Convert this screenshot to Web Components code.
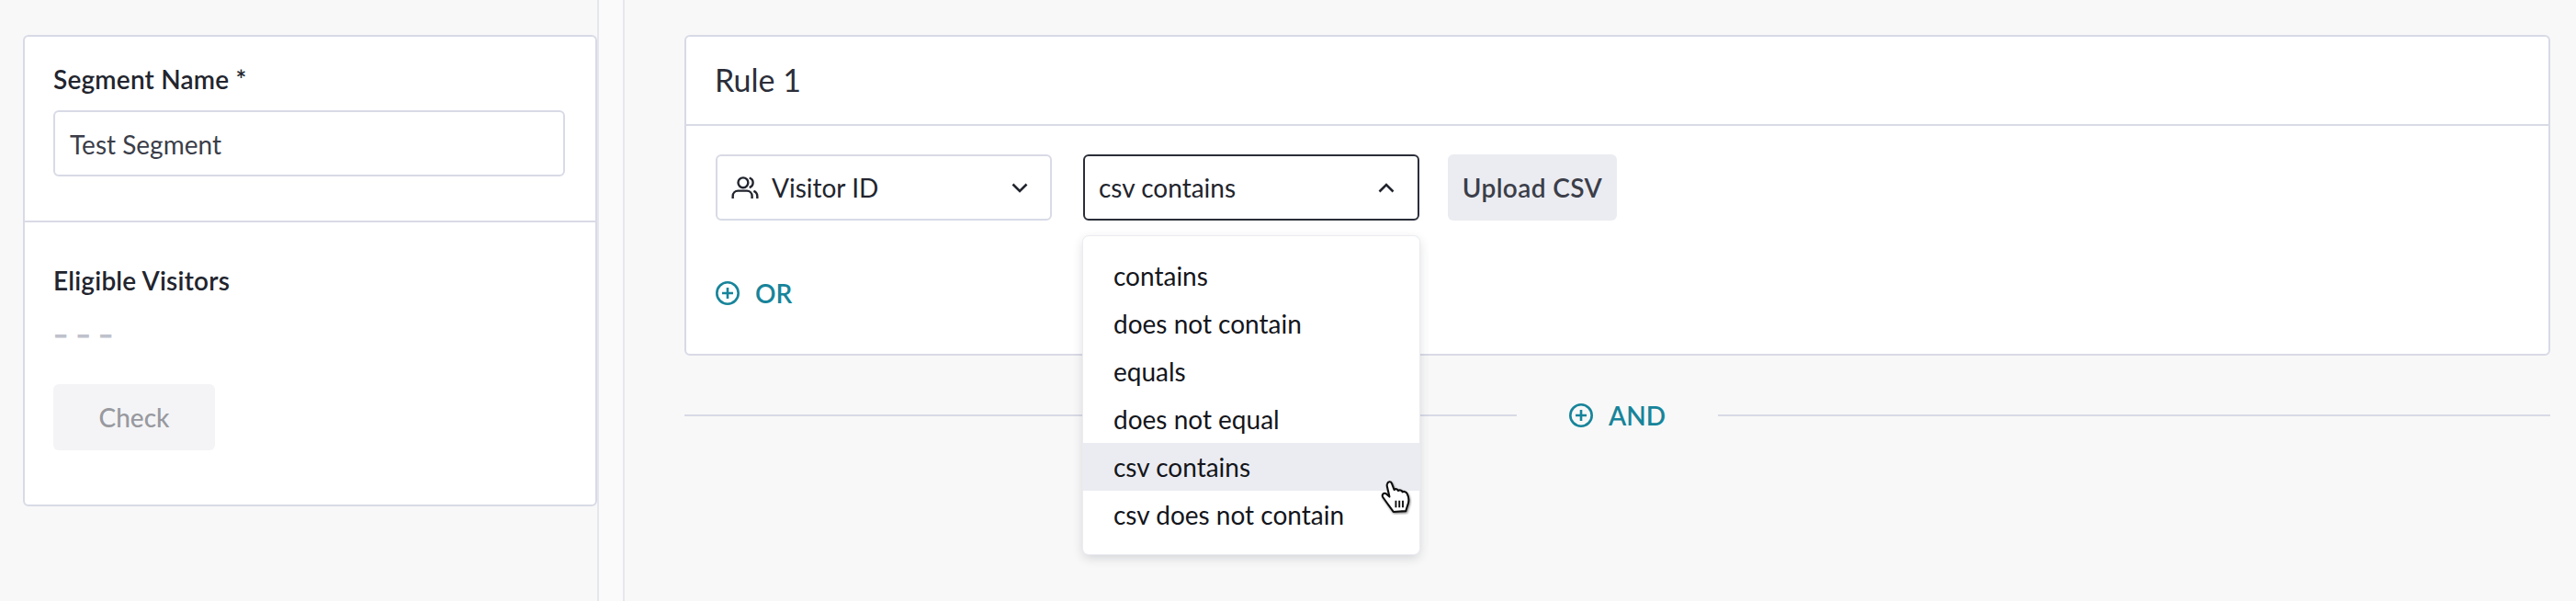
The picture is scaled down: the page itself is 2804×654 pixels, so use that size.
<!DOCTYPE html>
<html>
<head>
<meta charset="utf-8">
<style>
  html, body { margin: 0; height: 654px; overflow: hidden; background: #f8f8f8; }
  body { font-family: Lato, "Open Sans", sans-serif; font-size: 28px; color: #22252e; }
</style>
</head>
<body>
<segment-layout>
  <segment-sidebar slot="side"></segment-sidebar>
  <rule-panel></rule-panel>
</segment-layout>

<script>
const LAYOUT_TEMPLATE = document.createElement('template');
LAYOUT_TEMPLATE.innerHTML = `
  <style>
    :host { display: flex; height: 654px; }
    .side { width: 650px; flex: none; border-right: 2px solid #e6e7ed; }
    .gutter { width: 26px; flex: none; background: #fafafa; }
    .main { flex: 1; border-left: 2px solid #e6e7ed; min-width: 0; }
  </style>
  <div class="side"><slot name="side"></slot></div>
  <div class="gutter"></div>
  <div class="main"><slot></slot></div>
`;

class SegmentLayout extends HTMLElement {
  constructor() {
    super();
    this.attachShadow({ mode: 'open' });
    this.shadowRoot.appendChild(LAYOUT_TEMPLATE.content.cloneNode(true));
  }
}

const CARD_TEMPLATE = document.createElement('template');
CARD_TEMPLATE.innerHTML = `
  <style>
    :host {
      display: block;
      background: #fff;
      border: 2px solid #d8dae6;
      border-radius: 6px;
    }
    ::slotted(*) { display: block; }
    ::slotted(*:not(:last-child)) { border-bottom: 2px solid #d8dae6; }
  </style>
  <slot></slot>
`;

class SegCard extends HTMLElement {
  constructor() {
    super();
    this.attachShadow({ mode: 'open' });
    this.shadowRoot.appendChild(CARD_TEMPLATE.content.cloneNode(true));
  }
}

const BUTTON_TEMPLATE = document.createElement('template');
BUTTON_TEMPLATE.innerHTML = `
  <style>
    :host {
      display: inline-flex;
      align-items: center;
      justify-content: center;
      height: 72px;
      box-sizing: border-box;
      border-radius: 6px;
      font-weight: 600;
      letter-spacing: 0.4px;
      background: #ebecf1;
      color: #3b3e49;
    }
    :host([disabled]) {
      background: #f4f4f6;
      color: #98999f;
      font-weight: 500;
      letter-spacing: 0;
    }
  </style>
  <slot></slot>
`;

class SegButton extends HTMLElement {
  constructor() {
    super();
    this.attachShadow({ mode: 'open' });
    this.shadowRoot.appendChild(BUTTON_TEMPLATE.content.cloneNode(true));
  }
}

const SELECT_TEMPLATE = document.createElement('template');
SELECT_TEMPLATE.innerHTML = `
  <style>
    :host {
      display: block;
      position: relative;
      width: 366px;
      height: 72px;
    }
    .box {
      display: flex;
      align-items: center;
      height: 100%;
      box-sizing: border-box;
      padding: 0 24px 0 15px;
      border: 2px solid #d8dae6;
      border-radius: 6px;
      background: #fff;
    }
    :host([open]) .box { border-color: #2b2e39; padding-right: 25px; }
    .label { flex: 1; display: flex; align-items: center; gap: 14px; }
    svg.chev { width: 18px; height: 11px; fill: none; stroke: #22252e; stroke-width: 2.6; }
    :host([open]) svg.chev { transform: rotate(180deg); }
  </style>
  <div class="box">
    <div class="label"><slot name="icon"></slot><slot></slot></div>
    <svg class="chev" viewBox="0 0 18 11"><path d="M1.5 1.5 L9 9 L16.5 1.5"/></svg>
  </div>
  <slot name="menu"></slot>
`;

class SegSelect extends HTMLElement {
  constructor() {
    super();
    this.attachShadow({ mode: 'open' });
    this.shadowRoot.appendChild(SELECT_TEMPLATE.content.cloneNode(true));
  }
}

const MENU_TEMPLATE = document.createElement('template');
MENU_TEMPLATE.innerHTML = `
  <style>
    :host {
      display: block;
      position: absolute;
      z-index: 5;
      top: 89px;
      left: 0;
      width: 366px;
      box-sizing: border-box;
      padding: 17px 0 17px;
      background: #fff;
      border-radius: 6px;
      box-shadow: 0 0 0 1px #ebecf1, 0 4px 12px rgba(40, 42, 60, 0.18);
    }
  </style>
  <slot></slot>
`;

class SelectMenu extends HTMLElement {
  constructor() {
    super();
    this.attachShadow({ mode: 'open' });
    this.shadowRoot.appendChild(MENU_TEMPLATE.content.cloneNode(true));
  }
}

const OPTION_TEMPLATE = document.createElement('template');
OPTION_TEMPLATE.innerHTML = `
  <style>
    :host {
      display: flex;
      align-items: center;
      height: 52px;
      padding-left: 33px;
      color: #14161c;
    }
    :host([active]) { background: #ebecf1; }
  </style>
  <slot></slot>
`;

class SelectOption extends HTMLElement {
  constructor() {
    super();
    this.attachShadow({ mode: 'open' });
    this.shadowRoot.appendChild(OPTION_TEMPLATE.content.cloneNode(true));
  }
}

const ADD_TEMPLATE = document.createElement('template');
ADD_TEMPLATE.innerHTML = `
  <style>
    :host {
      display: inline-flex;
      align-items: center;
      gap: 17px;
      color: #17849a;
      font-weight: 600;
      line-height: 26px;
    }
    svg { width: 26px; height: 26px; fill: none; stroke: #17849a; stroke-width: 2.6; flex: none; }
  </style>
  <svg viewBox="0 0 26 26">
    <circle cx="13" cy="13" r="11.7"/>
    <path d="M13 7 V19 M7 13 H19"/>
  </svg>
  <slot></slot>
`;

class AddLink extends HTMLElement {
  constructor() {
    super();
    this.attachShadow({ mode: 'open' });
    this.shadowRoot.appendChild(ADD_TEMPLATE.content.cloneNode(true));
  }
}

const SIDEBAR_TEMPLATE = document.createElement('template');
SIDEBAR_TEMPLATE.innerHTML = `
  <style>
    :host { display: block; padding: 38px 0 0 25px; }
    seg-card { width: 625px; box-sizing: border-box; }
    .name { height: 202px; box-sizing: border-box; padding: 26px 31px 0; }
    .eligible { height: 307px; box-sizing: border-box; padding: 43px 31px 0; }
    .title { font-weight: 600; line-height: 40px; letter-spacing: 0.2px; color: #22252e; }
    .input {
      display: flex;
      align-items: center;
      height: 72px;
      width: 557px;
      margin-top: 14px;
      box-sizing: border-box;
      padding: 2px 0 0 16px;
      border: 2px solid #d8dae6;
      border-radius: 6px;
      color: #3b3e49;
    }
    .dashes { margin-top: 18px; line-height: 40px; letter-spacing: 0.7px; font-weight: 700; -webkit-text-stroke: 0.8px #bfc1cc; color: #bfc1cc; }
    seg-button { width: 176px; margin-top: 35px; }
  </style>
  <seg-card>
    <div class="name">
      <div class="title">Segment Name *</div>
      <div class="input">Test Segment</div>
    </div>
    <div class="eligible">
      <div class="title">Eligible Visitors</div>
      <div class="dashes">– – –</div>
      <seg-button disabled>Check</seg-button>
    </div>
  </seg-card>
`;

class SegmentSidebar extends HTMLElement {
  constructor() {
    super();
    this.attachShadow({ mode: 'open' });
    this.shadowRoot.appendChild(SIDEBAR_TEMPLATE.content.cloneNode(true));
  }
}

const PANEL_TEMPLATE = document.createElement('template');
PANEL_TEMPLATE.innerHTML = `
  <style>
    :host { display: block; position: relative; padding: 38px 28px 0 65px; }
    .head {
      height: 93px;
      padding: 0 0 2px 31px;
      display: flex;
      align-items: center;
      font-size: 34px;
      color: #2b2e39;
    }
    .body { height: 248px; box-sizing: border-box; padding: 31px 32px 0; }
    .row { display: flex; align-items: flex-start; gap: 34px; }
    .row seg-button { width: 184px; margin-left: -3px; }
    .or { margin-top: 66px; display: flex; }
    .and { display: flex; align-items: center; margin-top: 52px; }
    .and i { flex: 1; height: 2px; background: #d8dae6; }
    .and add-link { margin: 0 57px; }
    .hand { position: absolute; left: 823px; top: 522px; width: 34px; height: 38px; z-index: 9; }
    .people { width: 30px; height: 25px; fill: none; stroke: #22252e; stroke-width: 2.3; flex: none; }
  </style>
  <seg-card>
    <div class="head">Rule 1</div>
    <div class="body">
      <div class="row">
        <seg-select>
          <svg slot="icon" class="people" viewBox="0 0 28 24">
            <circle cx="12" cy="6.5" r="5.2"/>
            <path d="M1.2 23 V20.5 C1.2 17.4 3.6 15 6.7 15 H15.8 C18.9 15 21.3 17.4 21.3 20.5 V23"/>
            <path d="M18.5 1.5 A5.2 5.2 0 0 1 18.5 11.5"/>
            <path d="M23 15.3 C25.3 16.2 26.8 18.2 26.8 20.8 V23"/>
          </svg>
          Visitor ID
        </seg-select>
        <seg-select open>
          csv contains
          <select-menu slot="menu">
            <select-option>contains</select-option>
            <select-option>does not contain</select-option>
            <select-option>equals</select-option>
            <select-option>does not equal</select-option>
            <select-option active>csv contains</select-option>
            <select-option>csv does not contain</select-option>
          </select-menu>
        </seg-select>
        <seg-button>Upload CSV</seg-button>
      </div>
      <div class="or"><add-link>OR</add-link></div>
    </div>
  </seg-card>
  <div class="and"><i></i><add-link>AND</add-link><i></i></div>
  <svg class="hand" viewBox="0 0 36 40">
    <defs><filter id="s" x="-30%" y="-30%" width="160%" height="160%"><feDropShadow dx="1" dy="1.5" stdDeviation="1" flood-color="#000" flood-opacity=".45"/></filter></defs>
    <path filter="url(#s)" fill="#fff" stroke="#111" stroke-width="2.2" stroke-linejoin="round"
      d="M7.5 4.5 C8.5 1.5 11.5 1.5 12.6 4 L15.4 11.5 C16.8 10 19.4 10.6 20.2 12.6 C21.6 11.4 24.2 12 25 14 C26.6 13 29.4 13.8 30.4 16 C32.4 20 32.6 25 31 29 L28.8 36 L14.6 37 C12 33 6.5 26 2.4 20 C0.8 17 3.4 14.4 6 16 L10 19.5 L7.4 8 C7 6.5 7 5.5 7.5 4.5 Z"/>
    <path fill="none" stroke="#111" stroke-width="2" d="M17.4 24 V32 M21.4 24 V32 M25.4 24 V32"/>
  </svg>
`;

class RulePanel extends HTMLElement {
  constructor() {
    super();
    this.attachShadow({ mode: 'open' });
    this.shadowRoot.appendChild(PANEL_TEMPLATE.content.cloneNode(true));
  }
}

window.customElements.define('segment-layout', SegmentLayout);
window.customElements.define('seg-card', SegCard);
window.customElements.define('seg-button', SegButton);
window.customElements.define('seg-select', SegSelect);
window.customElements.define('select-menu', SelectMenu);
window.customElements.define('select-option', SelectOption);
window.customElements.define('add-link', AddLink);
window.customElements.define('segment-sidebar', SegmentSidebar);
window.customElements.define('rule-panel', RulePanel);
</script>
</body>
</html>
